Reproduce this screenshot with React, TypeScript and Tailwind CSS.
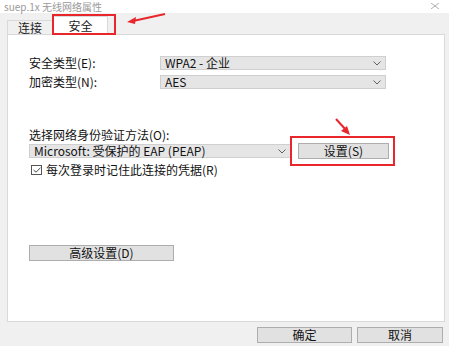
import React from 'react';

const font = { fontFamily: '"Noto Sans CJK SC", "Microsoft YaHei", sans-serif' };

function Chevron() {
  return (
    <svg width="8" height="5" viewBox="0 0 8 5" className="shrink-0">
      <path d="M0.5 0.5 L4 4 L7.5 0.5" fill="none" stroke="#606060" strokeWidth="1" />
    </svg>
  );
}

function Combo({ text, width }: { text: string; width: string }) {
  return (
    <div className={`${width} h-[14px] bg-[#e5e5e5] border border-[#cfcfcf] flex items-center justify-between pl-[4px] pr-[4px]`}>
      <span className="text-[12px] leading-none text-[#111]">{text}</span>
      <Chevron />
    </div>
  );
}

export default function App() {
  return (
    <div className="relative w-[449px] h-[346px] bg-[#f0f0f0] overflow-hidden" style={font}>
      {/* 标题栏 */}
      <div className="h-[13px] bg-white flex items-center justify-between pl-[4px] pr-[10px]">
        <span className="text-[10px] leading-[13px] text-[#9a9a9a]">suep.1x 无线网络属性</span>
        <svg width="8" height="6" viewBox="0 0 8 6" className="mb-[2px]">
          <path d="M0 0 L8 6 M8 0 L0 6" stroke="#9a9a9a" strokeWidth="0.8" />
        </svg>
      </div>

      {/* 标签页 */}
      <div className="relative h-[21px] ml-[7px]">
        <div className="absolute left-0 top-[7px] w-[46px] h-[14px] border border-b-0 border-[#d9d9d9] bg-[#f0f0f0] flex items-center justify-center text-[12px] text-[#222]">
          连接
        </div>
        <div className="absolute left-[46px] top-[3px] w-[55px] h-[19px] border border-b-0 border-[#d9d9d9] bg-white z-10 flex items-center justify-center text-[12px] text-[#222]">
          安全
        </div>
      </div>

      {/* 内容面板 */}
      <div className="ml-[7px] w-[438px] h-[288px] bg-white border border-[#d9d9d9] pl-[21px] text-[12px] text-[#111]">
        <div className="mt-[21px] flex items-center h-[14px]">
          <span className="w-[131px]">安全类型(E):</span>
          <Combo text="WPA2 - 企业" width="w-[226px]" />
        </div>
        <div className="mt-[5px] flex items-center h-[14px]">
          <span className="w-[131px]">加密类型(N):</span>
          <Combo text="AES" width="w-[226px]" />
        </div>

        <div className="mt-[39px] h-[14px] leading-[14px]">选择网络身份验证方法(O):</div>
        <div className="mt-[1px] flex items-center h-[16px]">
          <Combo text="Microsoft: 受保护的 EAP (PEAP)" width="w-[262px]" />
          <div className="ml-[7px] w-[91px] h-[16px] bg-[#e1e1e1] border border-[#adadad] flex items-center justify-center text-[12px]">
            设置(S)
          </div>
        </div>
        <div className="mt-[4px] flex items-center h-[14px]">
          <div className="w-[11px] h-[10px] border border-[#555] flex items-center justify-center ml-[2px]">
            <svg width="8" height="6" viewBox="0 0 8 6">
              <path d="M0.5 3 L3 5.2 L7.5 0.8" fill="none" stroke="#333" strokeWidth="0.9" />
            </svg>
          </div>
          <span className="ml-[4px]">每次登录时记住此连接的凭据(R)</span>
        </div>

        <div className="mt-[68px] w-[145px] h-[16px] bg-[#e1e1e1] border border-[#adadad] flex items-center justify-center">
          高级设置(D)
        </div>
      </div>

      {/* 底部按钮 */}
      <div className="mt-[5px] flex justify-end gap-[5px] pr-[6px] text-[12px] text-[#111]">
        <div className="w-[95px] h-[16px] bg-[#e1e1e1] border border-[#adadad] flex items-center justify-center">确定</div>
        <div className="w-[86px] h-[16px] bg-[#e1e1e1] border border-[#adadad] flex items-center justify-center">取消</div>
      </div>

      {/* 标注 */}
      <div className="absolute left-[52px] top-[14px] w-[64px] h-[21px] border-2 border-[#e8262c] z-20" />
      <div className="absolute left-[290px] top-[136px] w-[105px] h-[30px] border-2 border-[#e8262c] z-20" />
      <svg className="absolute left-0 top-0 z-30 pointer-events-none" width="449" height="346">
        <path d="M165 14 L133 21" stroke="#e8262c" strokeWidth="2" />
        <path d="M127 22 L136 17 L135 24 Z" fill="#e8262c" />
        <path d="M336 119 L346 130" stroke="#e8262c" strokeWidth="2" />
        <path d="M350 135 L341 131 L347 126 Z" fill="#e8262c" />
      </svg>
    </div>
  );
}
